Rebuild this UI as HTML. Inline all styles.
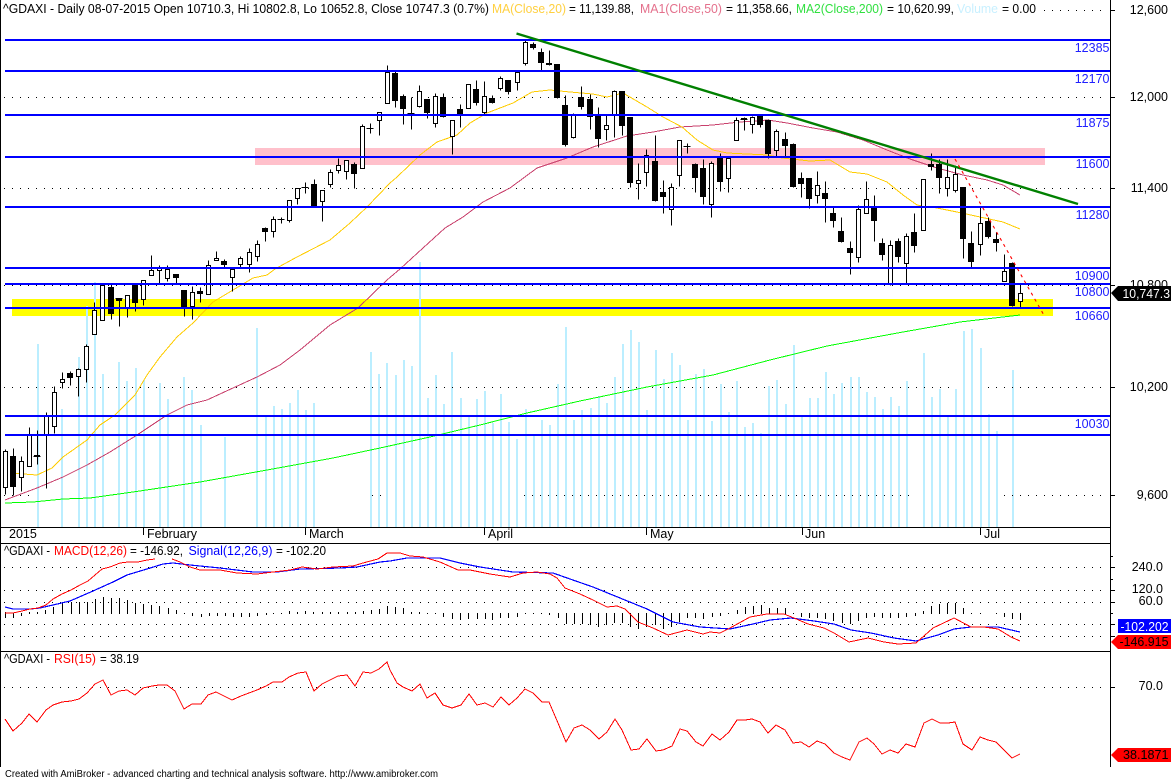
<!DOCTYPE html>
<html>
<head>
<meta charset="utf-8">
<title>^GDAXI chart</title>
<style>
html,body{margin:0;padding:0;background:#fff;width:1171px;height:781px;overflow:hidden}
svg{display:block}
text{font-family:"Liberation Sans",sans-serif;font-size:12.5px;fill:#000}
.l{fill:#2020ff}
.a{text-anchor:end}
</style>
</head>
<body>
<svg width="1171" height="781" viewBox="0 0 1171 781" xmlns="http://www.w3.org/2000/svg">
<rect width="1171" height="781" fill="#fff"/>
<!-- zones -->
<rect x="255" y="148" width="790" height="17" fill="#ffc0cb"/>
<rect x="12" y="299" width="1041" height="17" fill="#ffff00"/>
<!-- volume -->
<path fill="none" stroke="#bbeeff" stroke-width="2" shape-rendering="crispEdges" d="M38 344V527M62 409V527M79 357V527M87 306V527M95 282V527M103 374V527M119 362V527M127 381V527M136 368V527M144 380V527M160 383V527M168 399V527M184 377V527M192 390V527M201 425V527M225 437V527M257 328V527M266 416V527M274 406V527M282 409V527M290 403V527M298 390V527M306 410V527M314 403V527M371 352V527M379 374V527M387 363V527M396 375V527M404 360V527M412 366V527M420 262V527M428 398V527M436 375V527M444 404V527M452 352V527M461 398V527M469 417V527M477 399V527M485 391V527M493 423V527M501 394V527M509 422V527M517 439V527M526 409V527M534 436V527M542 420V527M550 425V527M558 384V527M566 327V527M574 420V527M582 410V527M591 408V527M599 396V527M607 403V527M615 377V527M623 344V527M631 330V527M639 342V527M647 410V527M656 350V527M664 379V527M672 353V527M680 365V527M688 420V527M696 374V527M704 369V527M712 421V527M721 384V527M729 412V527M737 381V527M745 427V527M753 423V527M761 433V527M769 386V527M777 380V527M786 404V527M794 345V527M802 417V527M810 398V527M818 398V527M826 372V527M834 394V527M842 383V527M851 377V527M859 377V527M867 392V527M875 397V527M883 409V527M891 397V527M899 406V527M907 381V527M924 353V527M932 397V527M940 389V527M948 417V527M956 389V527M964 331V527M972 329V527M981 348V527M989 414V527M997 431V527M1013 370V527"/>
<!-- grid dots -->
<g fill="none" stroke="#000" stroke-dasharray="1 7" shape-rendering="crispEdges">
<path d="M1044 10.5H1106M4 97.5H1108M4 188.5H1108M4 285.5H1108M4 387.5H388M428 387.5H956M988 387.5H1108M4 495.5H30M372 495.5H388M524 495.5H916M1004 495.5H1108"/>
<path d="M4 567.5H1108M4 590.5H1108M4 602.5H1108M4 624.5H1108M4 636.5H1108M4 687.5H1108"/>
</g>
<!-- MAs -->
<g fill="none" shape-rendering="crispEdges" stroke-width="1">
<polyline stroke="#00ff00" points="5,503 33,502 63,499 90,498 133,492 200,482 267,470 333,458 380,448 430,437 480,425 527,413 580,401 647,387 713,375 770,360 827,346 903,332 960,322 1020,315"/>
<polyline stroke="#c8406c" points="5,500 37,488 63,477 87,465 110,452 137,435 167,415 187,405 207,400 233,388 257,377 280,365 300,350 330,325 358,308 387,280 400,269 423,248 445,228 463,217 483,202 510,188 537,168 567,158 593,147 627,136 653,132 680,127 713,125 740,122 768,120 787,123 813,128 837,132 863,140 887,150 910,159 937,168 963,175 987,180 1003,185 1020,195"/>
<polyline stroke="#ffcc00" points="10,473 37,475 52,468 63,457 87,440 100,425 115,415 135,395 147,375 160,357 177,337 193,323 213,302 233,290 253,278 267,275 275,269 297,257 330,240 350,223 367,207 390,183 397,177 420,155 437,142 457,135 470,123 487,113 513,103 532,92 550,90 570,92 593,94 607,97 623,93 647,107 663,117 682,127 697,140 713,150 727,153 747,154 768,155 782,158 810,161 830,160 850,172 867,174 887,182 903,195 917,205 937,208 957,212 980,217 1003,222 1020,229"/>
</g>
<!-- candles -->
<g transform="translate(-.5 .5)" fill="none" stroke="#000" shape-rendering="crispEdges">
<path d="M6 449V494M14 448V495M22 456V491M30 427V466M38 430V464M47 412V488M55 386V433M63 372V388M71 371V385M79 368V396M87 344V382M95 302V334M103 283V320M112 284V319M120 298V326M128 295V317M136 284V311M144 280V305M152 255V274M160 265V283M168 265V281M177 274V283M185 290V316M193 286V319M201 287V302M209 260V294M217 251V260M225 259V267M233 267V291M241 256V267M250 248V272M258 240V261M266 227V241M274 216V237M282 217V223M290 200V222M298 188V204M306 182V193M315 179V206M323 190V221M331 169V187M339 158V173M347 160V179M355 162V188M363 124V168M371 123V133M380 112V135M388 65V103M396 70V107M404 94V124M412 97V129M420 85V107M428 99V118M436 93V127M444 93V117M453 120V154M461 104V127M469 84V108M477 80V105M485 81V115M493 95V103M501 76V90M509 80V94M518 70V90M526 40V65M534 42V49M542 48V70M550 50V65M558 64V98M566 95V146M574 113V138M582 86V109M591 94V129M599 107V147M607 115V140M615 90V137M623 91V135M631 117V187M639 163V199M647 149V186M656 135V201M664 180V213M672 183V225M680 140V186M688 143V153M696 163V192M704 159V204M712 161V217M721 153V191M729 157V192M737 117V140M745 117V130M753 116V133M761 116V127M769 119V158M777 129V157M786 132V157M794 143V187M802 172V197M810 178V208M818 171V203M826 181V222M834 207V227M842 217V242M851 241V274M859 205V262M867 181V213M875 195V241M883 238V260M891 240V285M899 238V262M907 233V283M915 213V252M924 179V230M932 153V170M940 159V193M948 159V196M956 165V192M964 187V258M972 231V267M981 207V255M989 217V238M997 232V251M1005 254V281M1013 262V306M1021 285V307"/>
<path d="M278 219H285M302 187H309M116 298H123M367 128H374M408 113H415M684 146H691M34 456H41M741 119H748"/>
<path fill="#fff" d="M4 451h4V487h-4zM20 461h4V477h-4zM28 434h4V466h-4zM45 416h4V434h-4zM53 392h4V426h-4zM61 379h4V382h-4zM77 369h4V376h-4zM85 346h4V369h-4zM93 310h4V334h-4zM101 285h4V320h-4zM126 295h4V307h-4zM142 280h4V299h-4zM150 270h4V275h-4zM158 267h4V270h-4zM166 269h4V278h-4zM191 292h4V306h-4zM207 265h4V294h-4zM215 258h4V260h-4zM231 269h4V277h-4zM239 258h4V264h-4zM248 252h4V264h-4zM256 244h4V256h-4zM272 219h4V231h-4zM288 200h4V220h-4zM296 188h4V198h-4zM321 190h4V201h-4zM329 172h4V184h-4zM337 165h4V170h-4zM345 160h4V171h-4zM361 126h4V168h-4zM378 112h4V120h-4zM386 72h4V103h-4zM418 91h4V106h-4zM434 96h4V123h-4zM451 120h4V136h-4zM467 84h4V108h-4zM483 96h4V112h-4zM499 78h4V88h-4zM516 72h4V82h-4zM524 42h4V63h-4zM572 114h4V137h-4zM605 125h4V129h-4zM613 91h4V115h-4zM637 180h4V183h-4zM645 155h4V172h-4zM670 187h4V209h-4zM678 140h4V175h-4zM710 163h4V204h-4zM727 158h4V178h-4zM735 120h4V140h-4zM751 117h4V124h-4zM775 131h4V150h-4zM816 185h4V195h-4zM857 209h4V257h-4zM865 199h4V213h-4zM889 245h4V284h-4zM905 236h4V263h-4zM922 179h4V230h-4zM946 177h4V188h-4zM954 174h4V190h-4zM979 223h4V244h-4zM1003 271h4V281h-4zM1019 293h4V301h-4z"/>
</g>
<path fill="#000" shape-rendering="crispEdges" transform="translate(-1 0)" d="M11 456h6V487h-6zM35 455h6V457h-6zM68 373h6V378h-6zM109 287h6V314h-6zM117 298h6V301h-6zM133 285h6V303h-6zM174 274h6V278h-6zM182 290h6V307h-6zM198 291h6V294h-6zM222 261h6V265h-6zM263 228h6V232h-6zM312 184h6V206h-6zM352 164h6V174h-6zM393 73h6V101h-6zM401 96h6V109h-6zM425 99h6V113h-6zM441 97h6V117h-6zM458 109h6V116h-6zM474 89h6V103h-6zM490 98h6V103h-6zM506 80h6V92h-6zM531 44h6V48h-6zM539 52h6V63h-6zM547 63h6V65h-6zM555 64h6V98h-6zM563 105h6V145h-6zM579 97h6V107h-6zM588 99h6V117h-6zM596 116h6V139h-6zM620 91h6V126h-6zM628 117h6V183h-6zM653 161h6V201h-6zM661 192h6V197h-6zM693 164h6V178h-6zM701 168h6V197h-6zM718 157h6V182h-6zM742 118h6V120h-6zM758 116h6V125h-6zM766 120h6V154h-6zM783 139h6V146h-6zM791 144h6V187h-6zM799 178h6V184h-6zM807 178h6V199h-6zM823 193h6V199h-6zM831 213h6V221h-6zM839 231h6V242h-6zM848 248h6V253h-6zM872 207h6V221h-6zM880 243h6V255h-6zM896 241h6V257h-6zM912 232h6V246h-6zM929 164h6V167h-6zM937 164h6V178h-6zM961 187h6V239h-6zM969 243h6V262h-6zM986 221h6V237h-6zM994 239h6V243h-6zM1010 263h6V306h-6z"/>
<!-- blue S/R lines -->
<path fill="#0000ff" shape-rendering="crispEdges" d="M5 39H1110V41H5zM5 70H1110V72H5zM5 114H1110V116H5zM5 156H1110V158H5zM5 206H1110V208H5zM5 267H1110V269H5zM5 283H1110V285H5zM5 307H1110V309H5zM5 415H1110V417H5zM5 434H1110V436H5z"/>
<!-- trend lines -->
<line x1="516.5" y1="33.5" x2="1078" y2="204" stroke="#008000" stroke-width="2.4"/>
<line x1="955" y1="159" x2="1045" y2="317" stroke="#ff0000" stroke-width="1.1" stroke-dasharray="3 4"/>
<!-- frames -->
<path fill="#000" shape-rendering="crispEdges" d="M0 0H1V767H0zM1110 0H1111V767H1110zM0 527H1111V528H0zM0 543H1111V544H0zM0 651H1111V652H0zM143 527H144V535H143zM305 527H306V535H305zM484 527H485V535H484zM646 527H647V535H646zM802 527H803V535H802zM980 527H981V535H980z"/>
<path fill="#000" shape-rendering="crispEdges" d="M1110 10H1115V11H1110zM1110 97H1115V98H1110zM1110 188H1115V189H1110zM1110 285H1115V286H1110zM1110 387H1115V388H1110zM1110 495H1115V496H1110zM1110 556H1113V557H1110zM1110 567H1115V568H1110zM1110 579H1113V580H1110zM1110 590H1115V591H1110zM1110 602H1115V603H1110zM1110 613H1113V614H1110zM1110 624H1115V625H1110zM1110 636H1115V637H1110zM1110 687H1115V688H1110z"/>
<!-- MACD hist -->
<path fill="none" stroke="#000" transform="translate(.5 0)" shape-rendering="crispEdges" d="M5 612V618M13 613V618M21 613V616M29 612V614M37 612V614M45 610V614M53 607V614M62 603V614M71 602V614M79 602V614M87 602V614M95 599V614M103 597V614M111 598V614M119 598V614M127 600V614M135 603V614M143 604V614M151 605V614M159 606V614M168 608V614M176 610V614M184 613V614M192 613V616M201 614V617M209 613V616M217 613V616M225 613V616M233 613V617M241 613V617M249 613V617M257 613V616M266 613V615M273 613V614M281 613V614M289 611V614M297 612V614M305 611V614M313 612V614M322 612V614M330 612V614M338 612V614M347 612V614M355 612V614M363 611V614M371 610V614M379 609V614M387 606V614M395 607V614M403 608V614M411 612V614M419 612V614M427 613V614M435 613V614M443 613V617M452 613V619M460 613V620M468 613V619M477 613V619M485 613V619M492 613V620M500 613V618M508 613V618M517 613V617M525 613V614M533 613V614M541 613V614M549 613V615M558 613V618M566 613V624M574 613V624M582 613V624M590 613V625M598 613V627M606 613V625M614 613V623M622 613V623M630 613V627M638 613V629M646 613V627M655 613V625M663 613V629M671 613V627M679 613V622M687 613V618M695 613V618M703 613V619M712 613V617M720 613V616M728 613V614M737 610V614M745 607V614M753 606V614M761 605V614M769 608V614M777 608V614M785 608V614M793 613V614M801 613V617M809 613V618M817 613V618M825 613V619M833 613V621M842 613V623M850 613V624M858 613V621M866 613V618M874 613V617M882 613V618M890 613V618M898 613V618M906 613V617M915 613V616M923 611V614M931 606V614M939 604V614M947 603V614M955 603V614M963 608V614M971 613V614M980 613V614M996 613V614M1004 613V617M1012 613V619M1020 613V620"/>
<!-- MACD lines -->
<g fill="none" shape-rendering="crispEdges" stroke-width="1">
<polyline stroke="#0000ff" stroke-width="1.2" points="5,607 13,609 30,609 40,608 53,605 70,601 93,591 113,582 127,575 147,569 163,564 173,563 190,565 220,568 253,572 277,572 300,569 340,568 357,567 380,562 390,561 407,558 440,558 460,563 480,567 513,572 553,573 570,579 593,587 620,598 647,609 673,622 700,627 730,629 753,624 770,620 791,618 814,621 834,624 851,630 871,633 894,638 916,641 938,635 954,629 971,627 998,627 1020,632"/>
<polyline stroke="#ff0000" points="5,613 13,613 22,611 30,609 38,608 46,605 53,599 62,594 71,590 80,585 88,581 95,575 102,569 110,567 120,563 128,562 138,562 147,560 155,559"/>
<polyline stroke="#ff0000" points="172,559 180,562 190,567 200,570 220,570 237,573 257,574 273,572 290,570 302,567 317,569 333,567 353,566 363,563 378,559 387,553 400,553 410,556 423,557 440,562 458,570 470,570 490,574 503,576 510,577 523,573 537,572 550,574 557,578 565,588 580,594 593,600 607,607 617,606 625,609 638,622 653,628 668,635 687,630 703,634 710,632 720,633 730,628 750,617 767,614 784,614 794,618 808,624 824,628 834,633 849,642 868,638 884,642 898,644 916,643 933,628 954,618 971,627 984,627 998,629 1011,637 1020,641"/>
<!-- RSI -->
<polyline stroke="#ff0000" points="5,719 13,731 22,723 29,714 37,722 46,710 53,705 62,702 71,701 79,699 87,693 95,684 103,680 111,695 119,691 127,690 135,695 143,688 152,686 159,685 167,685 175,691 184,709 192,704 201,704 208,695 216,692 224,696 232,700 241,696 249,693 257,690 266,686 273,682 282,682 289,677 298,673 306,672 314,691 322,684 330,680 338,676 347,675 355,686 363,672 371,673 379,669 387,662 390,670 397,683 403,687 412,691 420,684 427,698 435,693 443,705 452,708 461,705 469,694 477,705 485,703 493,707 501,697 509,705 517,698 525,689 533,693 542,702 549,702 558,723 566,742 574,728 582,725 590,730 599,739 607,732 615,719 622,730 631,750 639,749 647,739 656,751 663,750 672,746 680,729 687,731 696,742 703,746 712,734 720,740 729,732 737,720 745,720 752,719 760,722 768,733 776,725 785,730 793,743 801,742 809,747 817,741 825,744 834,753 842,757 850,760 859,742 867,738 874,744 882,754 890,750 898,753 906,744 915,747 924,723 932,719 940,723 948,723 955,722 963,744 972,750 980,737 988,740 996,742 1004,750 1012,758 1020,754"/>
</g>
<!-- title -->
<text x="3" y="13" textLength="486" lengthAdjust="spacingAndGlyphs">^GDAXI - Daily 08-07-2015 Open 10710.3, Hi 10802.8, Lo 10652.8, Close 10747.3 (0.7%)</text>
<text x="492" y="13" textLength="74" lengthAdjust="spacingAndGlyphs" style="fill:#ffd040">MA(Close,20)</text>
<text x="569" y="13" textLength="65" lengthAdjust="spacingAndGlyphs">= 11,139.88,</text>
<text x="640" y="13" textLength="82" lengthAdjust="spacingAndGlyphs" style="fill:#e4708c">MA1(Close,50)</text>
<text x="726" y="13" textLength="66" lengthAdjust="spacingAndGlyphs">= 11,358.66,</text>
<text x="796" y="13" textLength="87" lengthAdjust="spacingAndGlyphs" style="fill:#30e040">MA2(Close,200)</text>
<text x="887" y="13" textLength="67" lengthAdjust="spacingAndGlyphs">= 10,620.99,</text>
<text x="957" y="13" textLength="41" lengthAdjust="spacingAndGlyphs" style="fill:#c8f0ff">Volume</text>
<text x="1002" y="13" textLength="34" lengthAdjust="spacingAndGlyphs">= 0.00</text>
<!-- level labels -->
<text class="l a" x="1109.5" y="52">12385</text>
<text class="l a" x="1109.5" y="83">12170</text>
<text class="l a" x="1109.5" y="127">11875</text>
<text class="l a" x="1109.5" y="168">11600</text>
<text class="l a" x="1109.5" y="219">11280</text>
<text class="l a" x="1109.5" y="280">10900</text>
<text class="l a" x="1109.5" y="296">10800</text>
<text class="l a" x="1109.5" y="320">10660</text>
<text class="l a" x="1109.5" y="428">10030</text>
<!-- axis labels -->
<text class="a" x="1168" y="14">12,600</text>
<text class="a" x="1168" y="101">12,000</text>
<text class="a" x="1168" y="192">11,400</text>
<text class="a" x="1168" y="289">10,800</text>
<text class="a" x="1168" y="391">10,200</text>
<text class="a" x="1168" y="499">9,600</text>
<polygon points="1111,293 1118,286 1171,286 1171,301 1118,301" fill="#000"/>
<text x="1122.5" y="298" textLength="47.5" lengthAdjust="spacingAndGlyphs" style="fill:#fff">10,747.3</text>
<!-- dates -->
<text x="9" y="538">2015</text>
<text x="147" y="538">February</text>
<text x="309" y="538">March</text>
<text x="488" y="538">April</text>
<text x="650" y="538">May</text>
<text x="805" y="538">Jun</text>
<text x="984" y="538">Jul</text>
<!-- MACD text -->
<text x="4" y="555" textLength="46" lengthAdjust="spacingAndGlyphs">^GDAXI -</text>
<text x="54" y="555" textLength="73" lengthAdjust="spacingAndGlyphs" style="fill:#ff0000">MACD(12,26)</text>
<text x="130" y="555" textLength="53" lengthAdjust="spacingAndGlyphs">= -146.92,</text>
<text x="188.5" y="555" textLength="84" lengthAdjust="spacingAndGlyphs" style="fill:#0000ff">Signal(12,26,9)</text>
<text x="276" y="555" textLength="50" lengthAdjust="spacingAndGlyphs">= -102.20</text>
<text class="a" x="1163" y="571">240.0</text>
<text class="a" x="1163" y="593">120.0</text>
<text class="a" x="1163" y="605">60.0</text>
<rect x="1118" y="619" width="53" height="14" fill="#0000ff"/>
<text x="1120.5" y="631" textLength="48" lengthAdjust="spacingAndGlyphs" style="fill:#fff">-102.202</text>
<polygon points="1111,642 1118,635 1171,635 1171,649 1118,649" fill="#ff0000"/>
<text x="1119.5" y="646" textLength="49" lengthAdjust="spacingAndGlyphs">-146.915</text>
<!-- RSI text -->
<text x="4" y="663" textLength="46" lengthAdjust="spacingAndGlyphs">^GDAXI -</text>
<text x="54" y="663" textLength="42" lengthAdjust="spacingAndGlyphs" style="fill:#ff0000">RSI(15)</text>
<text x="100" y="663" textLength="39" lengthAdjust="spacingAndGlyphs">= 38.19</text>
<text class="a" x="1163" y="690">70.0</text>
<polygon points="1111,755 1118,748 1171,748 1171,762 1118,762" fill="#ff0000"/>
<text x="1123" y="759" textLength="45.5" lengthAdjust="spacingAndGlyphs">38.1871</text>
<!-- footer -->
<text x="5" y="777" textLength="433" lengthAdjust="spacingAndGlyphs" style="font-size:10px">Created with AmiBroker - advanced charting and technical analysis software. http://www.amibroker.com</text>
</svg>
</body>
</html>
